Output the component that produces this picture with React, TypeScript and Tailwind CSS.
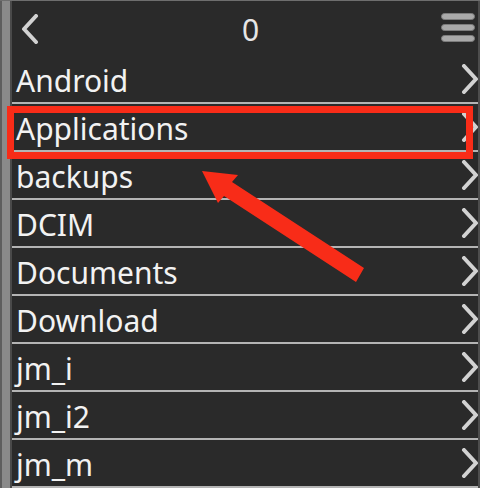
const folders = [
  "Android",
  "Applications",
  "backups",
  "DCIM",
  "Documents",
  "Download",
  "jm_i",
  "jm_i2",
  "jm_m",
];

function Chevron({ left = false }: { left?: boolean }) {
  return (
    <svg width="18" height="30" viewBox="0 0 18 30" className="block">
      <path
        d={left ? "M15 2 L3 15 L15 28" : "M3 2 L15 15 L3 28"}
        fill="none"
        stroke="#d2d2d2"
        strokeWidth="4"
        strokeLinecap="round"
        strokeLinejoin="round"
      />
    </svg>
  );
}

function MenuIcon() {
  return (
    <div className="flex flex-col gap-[4px] w-[34px]">
      <div className="h-[7px] rounded-full bg-[#a9a9a9] border border-[#7c7c7c]" />
      <div className="h-[7px] rounded-full bg-[#a9a9a9] border border-[#7c7c7c]" />
      <div className="h-[7px] rounded-full bg-[#a9a9a9] border border-[#7c7c7c]" />
    </div>
  );
}

export default function App() {
  return (
    <div
      className="relative w-[480px] h-[488px] overflow-hidden flex bg-[#2a2a2a] border-t border-[#6e6e6e]"
      style={{ fontFamily: '"Noto Sans", "Open Sans", sans-serif' }}
    >
      <div className="w-[12px] shrink-0 bg-[#8a8a8a] border-l-2 border-r-2 border-l-[#5e5e5e] border-r-[#4a4a4a]" />

      <div className="flex-1 flex flex-col">
        <header className="h-[55px] shrink-0 grid grid-cols-[1fr_auto_1fr] items-center pl-[9px] pr-[3px]">
          <div className="pt-[1px]">
            <Chevron left />
          </div>
          <span className="text-[30px] leading-none text-[#e6e6e6] pl-[5px] pt-[2px]">0</span>
          <div className="flex justify-end pb-[2px]">
            <MenuIcon />
          </div>
        </header>

        {folders.map((name) => (
          <div
            key={name}
            className="h-[48px] shrink-0 flex items-center justify-between pl-[4px] border-b-2 border-[#b4b4b4]"
          >
            <span className="text-[30px] leading-none text-[#f2f2f2] pt-[4px]">{name}</span>
            <div className="-mr-[1px]">
              <Chevron />
            </div>
          </div>
        ))}
      </div>

      <div className="w-[2px] shrink-0 bg-[#4d4d4d]" />

      {/* annotation overlays */}
      <div className="absolute left-[7px] top-[105px] w-[466px] h-[53px] border-[7px] border-[#f82c18]" />
      <svg
        className="absolute left-0 top-0"
        width="480"
        height="488"
        viewBox="0 0 480 488"
      >
        <polygon
          points="202,170 238,174 232,181 364,267 356,281 224,195 218,202"
          fill="#f82c18"
        />
      </svg>
    </div>
  );
}
